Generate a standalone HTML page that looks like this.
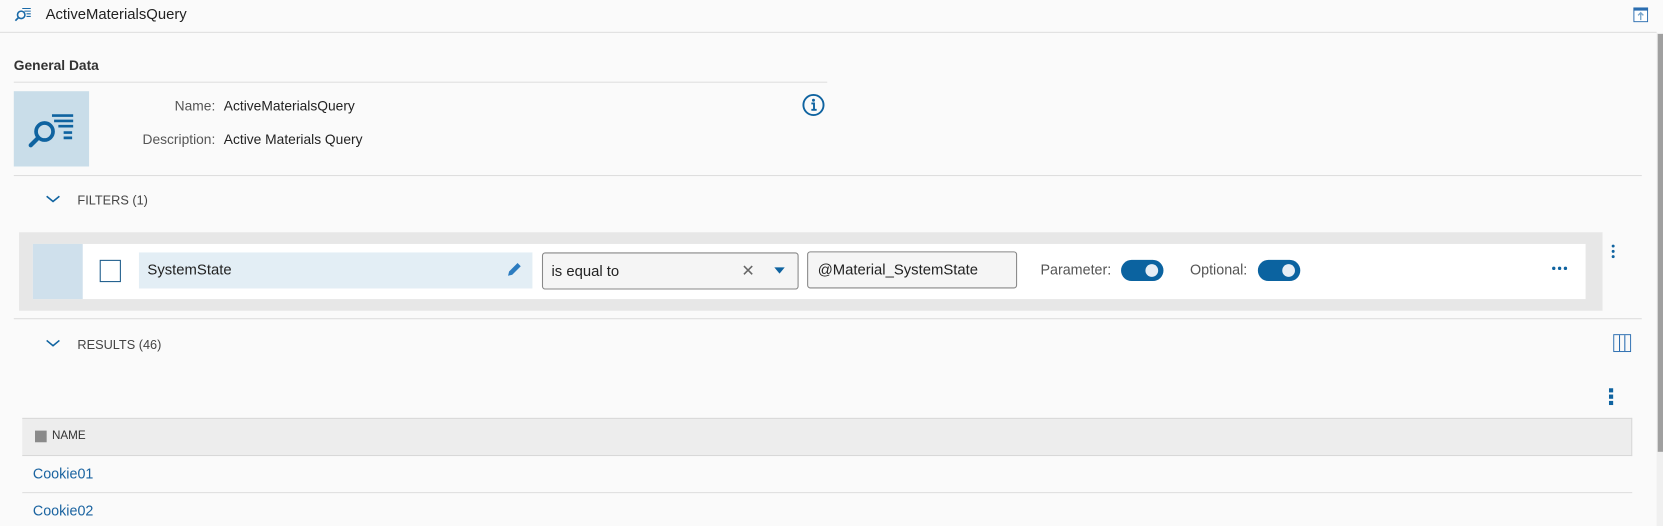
<!DOCTYPE html>
<html><head><meta charset="utf-8"><style>
*{margin:0;padding:0;box-sizing:border-box}
html,body{width:1663px;height:526px;overflow:hidden;background:#fafafa}
#w{position:absolute;left:0;top:0;width:1568px;height:496px;transform:scale(1.06059);transform-origin:0 0;font-family:"Liberation Sans",sans-serif;color:#222;font-size:13px}
.a{position:absolute}
.hl{position:absolute;height:1px;background:#dedede}
.tog{position:absolute;width:40px;height:20px;border-radius:10px;background:#0b63a0}
.tog:after{content:"";position:absolute;right:5px;top:4px;width:12px;height:12px;border-radius:6px;background:#e6eef5}
</style></head><body><div id="w">
<svg class="a" style="left:13px;top:5px" width="18" height="16" viewBox="0 0 18 16"><circle cx="7" cy="9" r="3.5" fill="none" stroke="#1a6aa8" stroke-width="1.5"/><line x1="4.5" y1="11.5" x2="1.5" y2="14.5" stroke="#1a6aa8" stroke-width="1.6"/><path d="M8 3h8M10 5.5h6M12 8h4M12 10.5h4" stroke="#1a6aa8" stroke-width="1"/></svg>
<div class="a" style="left:43px;top:5px;font-size:14px">ActiveMaterialsQuery</div>
<svg class="a" style="left:1540px;top:7px" width="14" height="14"><rect x="0.5" y="0.5" width="13" height="13" fill="#fff" stroke="#2a6db0"/><rect x="0" y="0" width="14" height="3" fill="#2a6db0"/><path d="M7 12V5M4.5 7.5L7 5l2.5 2.5" stroke="#7aa6cc" stroke-width="1.3" fill="none"/></svg>
<div class="hl" style="left:0;top:30px;width:1562px"></div>
<div class="a" style="left:13px;top:54px;font-weight:bold;font-size:13px;color:#333">General Data</div>
<div class="hl" style="left:13px;top:77px;width:767px"></div>
<div class="a" style="left:13px;top:86px;width:71px;height:71px;background:#c9dde9"></div>
<svg class="a" style="left:26px;top:97px" width="48" height="48" viewBox="0 0 48 48"><circle cx="16" cy="27" r="8" fill="none" stroke="#0f63a0" stroke-width="3.5"/><line x1="10" y1="33" x2="3" y2="40" stroke="#0f63a0" stroke-width="4" stroke-linecap="round"/><path d="M23 12h20M25 17h18M29 22h14M34 28h8M34 33h8" stroke="#0f63a0" stroke-width="2.5"/></svg>
<div class="a" style="left:100px;top:92px;width:103px;text-align:right;color:#555">Name:</div>
<div class="a" style="left:211px;top:92px">ActiveMaterialsQuery</div>
<div class="a" style="left:100px;top:124px;width:103px;text-align:right;color:#555">Description:</div>
<div class="a" style="left:211px;top:124px">Active Materials Query</div>
<svg class="a" style="left:756px;top:88px" width="22" height="22"><circle cx="11" cy="11" r="9.5" fill="none" stroke="#0f63a0" stroke-width="1.8"/><circle cx="11" cy="6.5" r="1.4" fill="#0f63a0"/><path d="M9 9.5h2.5v6M9 15.5h5" stroke="#0f63a0" stroke-width="1.8" fill="none"/></svg>
<div class="hl" style="left:13px;top:165px;width:1535px"></div>
<svg class="a" style="left:43px;top:184px" width="14" height="8"><path d="M1 1l6 5 6-5" stroke="#0f63a0" stroke-width="1.5" fill="none"/></svg>
<div class="a" style="left:73px;top:182px;font-size:12px;color:#444">FILTERS (1)</div>
<div class="a" style="left:18px;top:219px;width:1493px;height:74px;background:#e7e7e7"></div>
<div class="a" style="left:31px;top:230px;width:1464px;height:52px;background:#fff"></div>
<div class="a" style="left:31px;top:230px;width:47px;height:52px;background:#cfe0ec"></div>
<div class="a" style="left:94px;top:245px;width:20px;height:21px;border:1.5px solid #1a5a8a;background:#fff"></div>
<div class="a" style="left:131px;top:238px;width:371px;height:34px;background:#e3eef5"></div>
<div class="a" style="left:139px;top:246px;font-size:14px">SystemState</div>
<svg class="a" style="left:476px;top:245px" width="18" height="18"><path d="M3 15l1-4 8-8 3 3-8 8z" fill="#2c7cc0"/></svg>
<div class="a" style="left:511px;top:238px;width:242px;height:35px;border:1px solid #888;border-radius:3px;background:#f5f5f5"></div>
<div class="a" style="left:520px;top:247px;font-size:14px">is equal to</div>
<div class="a" style="left:699px;top:246px;font-size:15px;color:#666">✕</div>
<svg class="a" style="left:730px;top:252px" width="10" height="6"><path d="M0 0h10L5 6z" fill="#0f63a0"/></svg>
<div class="a" style="left:761px;top:237px;width:198px;height:35px;border:1px solid #888;border-radius:3px;background:#f5f5f5"></div>
<div class="a" style="left:771px;top:246px;font-size:14px">@Material_SystemState</div>
<div class="a" style="left:981px;top:247px;color:#555;font-size:13.5px">Parameter:</div>
<div class="tog" style="left:1057px;top:245px"></div>
<div class="a" style="left:1122px;top:247px;color:#555;font-size:13.5px">Optional:</div>
<div class="tog" style="left:1186px;top:245px"></div>
<svg class="a" style="left:1463px;top:251px" width="15" height="4"><circle cx="2" cy="2" r="1.6" fill="#0f63a0"/><circle cx="7.5" cy="2" r="1.6" fill="#0f63a0"/><circle cx="13" cy="2" r="1.6" fill="#0f63a0"/></svg>
<svg class="a" style="left:1519px;top:230px" width="4" height="14"><circle cx="2" cy="2" r="1.4" fill="#0f63a0"/><circle cx="2" cy="7" r="1.4" fill="#0f63a0"/><circle cx="2" cy="12" r="1.4" fill="#0f63a0"/></svg>
<div class="hl" style="left:13px;top:300px;width:1535px"></div>
<svg class="a" style="left:43px;top:320px" width="14" height="8"><path d="M1 1l6 5 6-5" stroke="#0f63a0" stroke-width="1.5" fill="none"/></svg>
<div class="a" style="left:73px;top:318px;font-size:12px;color:#444">RESULTS (46)</div>
<svg class="a" style="left:1521px;top:315px" width="17" height="17"><rect x="0.5" y="0.5" width="16" height="16" fill="none" stroke="#2a6db0"/><path d="M6 1v15M11 1v15" stroke="#2a6db0"/></svg>
<svg class="a" style="left:1517px;top:366px" width="5" height="16"><rect x="0" y="0" width="4" height="4" fill="#0f63a0"/><rect x="0" y="6" width="4" height="4" fill="#0f63a0"/><rect x="0" y="12" width="4" height="4" fill="#0f63a0"/></svg>
<div class="a" style="left:21px;top:394px;width:1518px;height:36px;background:#ededed;border:1px solid #d8d8d8;border-left:none"></div>
<div class="a" style="left:33px;top:406px;width:11px;height:11px;background:#8a8a8a"></div>
<div class="a" style="left:49px;top:405px;font-size:11px;color:#333">NAME</div>
<div class="a" style="left:31px;top:439px;font-size:13.5px;color:#1a63a0">Cookie01</div>
<div class="hl" style="left:21px;top:464px;width:1518px"></div>
<div class="a" style="left:31px;top:474px;font-size:13.5px;color:#1a63a0">Cookie02</div>
<div class="a" style="left:1562px;top:31px;width:6px;height:465px;background:#f0f0f0"></div>
<div class="a" style="left:1563px;top:32px;width:5px;height:394px;background:#a0a0a0"></div>
</div></body></html>
